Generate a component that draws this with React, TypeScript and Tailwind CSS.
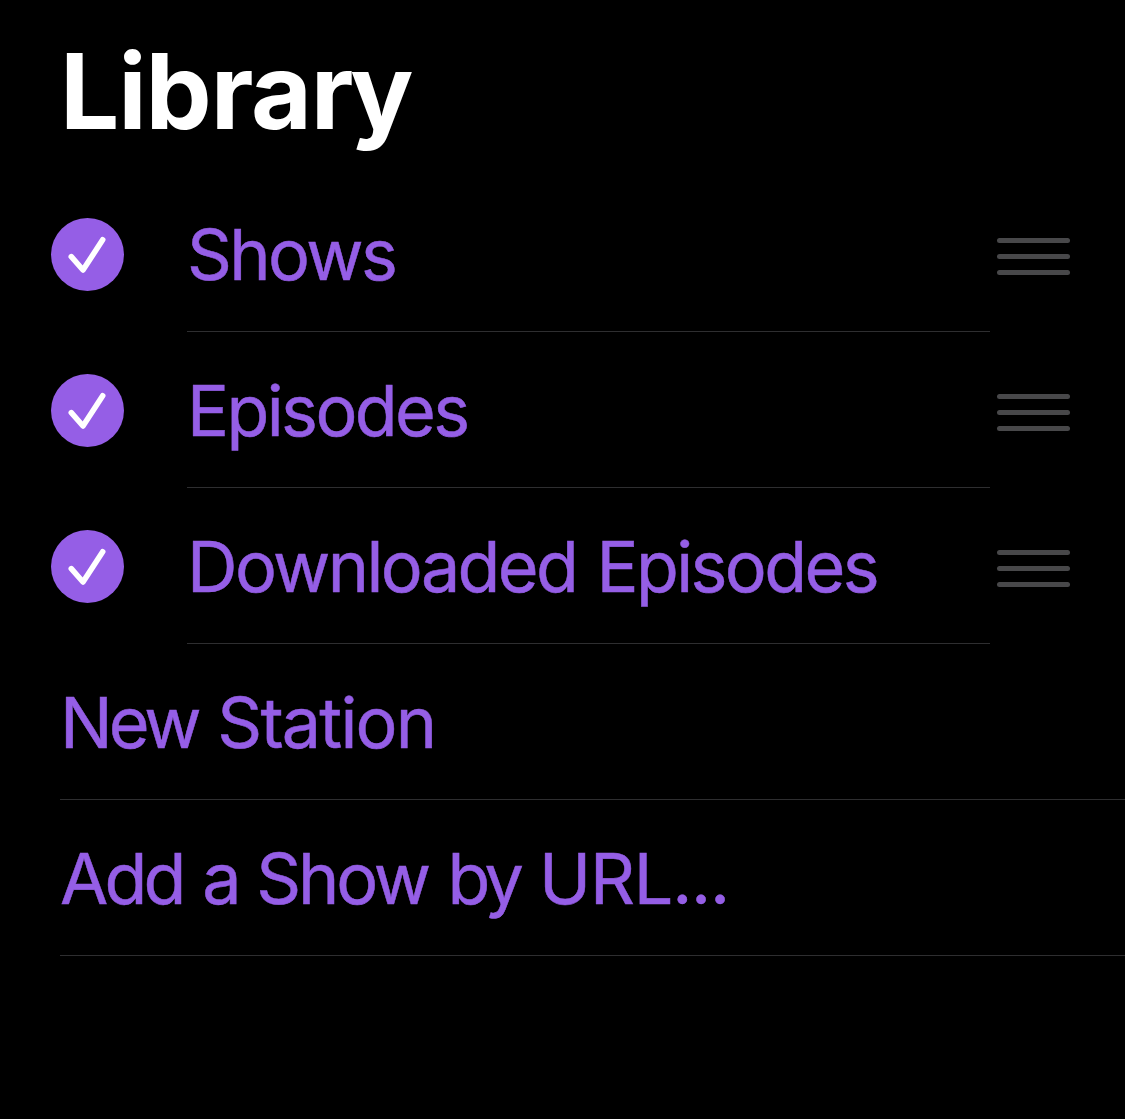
import React, { useState } from 'react';
import clsx from 'clsx';

interface LibraryItem {
  id: number;
  title: string;
  checked: boolean;
}

interface Word {
  text: string;
  tracking: string;
}

const CheckCircle: React.FC<{ checked: boolean }> = ({ checked }) => (
  <svg viewBox="0 0 73 73" fill="none" className="h-[73px] w-[73px]">
    <circle
      cx="36.5"
      cy="36.5"
      r={checked ? 36.5 : 34.5}
      className={clsx(checked ? 'fill-[#955ee6]' : 'stroke-[#48484a] stroke-[4]')}
    />
    {checked && (
      <path
        d="M20.3 38.7L32 52L51.7 21.8"
        stroke="#fff"
        strokeWidth="5.6"
        strokeLinecap="round"
        strokeLinejoin="round"
      />
    )}
  </svg>
);

const DragHandle: React.FC = () => (
  <div className="flex w-[73px] flex-col gap-[11px]">
    <span className="h-[5px] rounded-full bg-[#48484a]" />
    <span className="h-[5px] rounded-full bg-[#48484a]" />
    <span className="h-[5px] rounded-full bg-[#48484a]" />
  </div>
);

// Large text is kerned word by word
const actions: Word[][] = [
  [
    { text: 'New', tracking: 'tracking-[-4px]' },
    { text: 'Station', tracking: 'tracking-[-1.8px]' },
  ],
  [
    { text: 'Add', tracking: 'tracking-[-3.8px]' },
    { text: 'a', tracking: 'tracking-[-5px]' },
    { text: 'Show', tracking: 'tracking-[-3.2px]' },
    { text: 'by', tracking: 'tracking-[-4.5px]' },
    { text: 'URL...', tracking: 'tracking-[-1.2px]' },
  ],
];

const App: React.FC = () => {
  const [items, setItems] = useState<LibraryItem[]>([
    { id: 1, title: 'Shows', checked: true },
    { id: 2, title: 'Episodes', checked: true },
    { id: 3, title: 'Downloaded Episodes', checked: true },
  ]);

  const toggleItem = (id: number) => {
    setItems(prev => prev.map(item =>
      item.id === id ? { ...item, checked: !item.checked } : item
    ));
  };

  return (
    <div className="min-h-screen overflow-hidden bg-black font-['Inter',sans-serif] text-[70px] leading-none text-[#955ee6]">
      <header className="flex h-44 items-center pt-[5px] pl-[60px]">
        <h1 className="text-[105px] leading-none font-bold tracking-[-1.1px] text-white">
          Libra<span className="tracking-[-3.2px]">r</span>y
        </h1>
      </header>

      <ul className="[-webkit-text-stroke:0.5px_#955ee6]">
        {items.map(item => (
          <li key={item.id} className="flex h-[156px] pl-[51px]">
            <button onClick={() => toggleItem(item.id)} className="flex w-[136px] shrink-0 items-center pt-[1px]">
              <CheckCircle checked={item.checked} />
            </button>
            <div className="flex w-[803px] shrink-0 items-center border-b border-[#2e2e30] pt-[3px] tracking-[-2.6px] [word-spacing:3px] whitespace-nowrap">
              {item.title}
            </div>
            <div className="flex items-center pt-[5px] pl-[7px]">
              <DragHandle />
            </div>
          </li>
        ))}
      </ul>

      {/* Actions */}
      <div className="pl-[60px] [-webkit-text-stroke:0.5px_#955ee6]">
        {actions.map((words, index) => (
          <button
            key={index}
            className="flex h-[156px] w-full items-center border-b border-[#2e2e30] pt-[3px] text-left whitespace-nowrap"
          >
            <span>
              {words.map((word, i) => (
                <React.Fragment key={word.text}>
                  {i > 0 && ' '}
                  <span className={word.tracking}>{word.text}</span>
                </React.Fragment>
              ))}
            </span>
          </button>
        ))}
      </div>
    </div>
  );
};

export default App;
